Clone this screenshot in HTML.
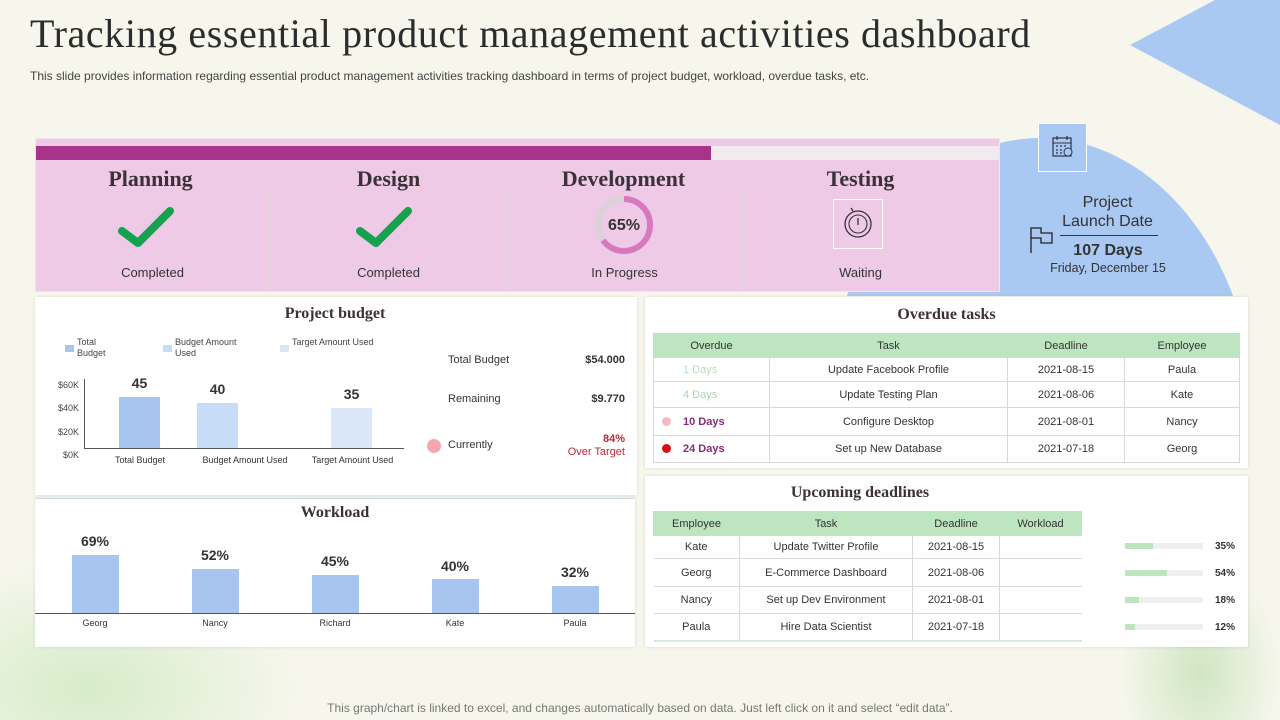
<!DOCTYPE html>
<html><head><meta charset="utf-8"><style>
*{margin:0;padding:0;box-sizing:border-box}
html,body{width:1280px;height:720px;overflow:hidden}
body{position:relative;font-family:"Liberation Sans",sans-serif;background:#f6f6ec;color:#333}
.a{position:absolute}
.serif{font-family:"Liberation Serif",serif;font-weight:bold;color:#3b3139}
.c{text-align:center}
.panel{position:absolute;background:#fff;box-shadow:0 0 3px rgba(0,0,0,.12)}
table{border-collapse:collapse;position:absolute;font-size:11px;color:#333}
td,th{text-align:center;border:1px solid #d8d8d8;font-weight:normal}
th{background:#bde5c0;border-color:#bde5c0}
</style></head><body>
<div class="a" style="left:0;top:560px;width:300px;height:160px;background:radial-gradient(ellipse at 30% 80%,#d6ecc9 0%,rgba(246,246,236,0) 70%)"></div>
<div class="a" style="left:1120px;top:560px;width:160px;height:160px;background:radial-gradient(ellipse at 50% 70%,#cfe6c2 0%,rgba(246,246,236,0) 70%)"></div>
<svg class="a" style="left:0;top:0" width="1280" height="300">
<defs><clipPath id="cp"><rect x="0" y="0" width="1280" height="296"/></clipPath></defs>
<polygon points="1130,45 1215,0 1280,0 1280,125" fill="#a9c8f2"/>
<ellipse cx="1040" cy="420" rx="215" ry="282" fill="#a9c8f2" clip-path="url(#cp)"/>
</svg>
<div class="a serif" style="left:30px;top:10px;font-size:40px;font-weight:normal;color:#2c2c2c;letter-spacing:0.6px;white-space:nowrap">Tracking essential product management activities dashboard</div>
<div class="a" style="left:30px;top:69px;font-size:12px;color:#444;white-space:nowrap">This slide provides information regarding essential product management activities tracking dashboard in terms of project budget, workload, overdue tasks, etc.</div>

<!-- pink panel -->
<div class="a" style="left:35px;top:138px;width:965px;height:154px;background:#efcae6;border:1px solid #f3e3ee"></div>
<div class="a" style="left:36px;top:146px;width:675px;height:14px;background:#a8338b"></div>
<div class="a" style="left:711px;top:146px;width:288px;height:14px;background:#f1ebf0"></div>
<div class="a" style="left:270px;top:188px;width:1px;height:104px;background:#e3d3dd"></div>
<div class="a" style="left:506px;top:188px;width:1px;height:104px;background:#e3d3dd"></div>
<div class="a" style="left:742px;top:188px;width:1px;height:104px;background:#e3d3dd"></div>
<div class="a serif c" style="left:33px;top:166px;width:235px;font-size:22px">Planning</div>
<div class="a serif c" style="left:271px;top:166px;width:235px;font-size:22px">Design</div>
<div class="a serif c" style="left:506px;top:166px;width:235px;font-size:22px">Development</div>
<div class="a serif c" style="left:743px;top:166px;width:235px;font-size:22px">Testing</div>
<svg class="a" style="left:115px;top:205px" width="60" height="45"><path d="M7,26 L23,38 L55,6" fill="none" stroke="#14a24c" stroke-width="8" stroke-linecap="round" stroke-linejoin="round"/></svg>
<svg class="a" style="left:353px;top:205px" width="60" height="45"><path d="M7,26 L23,38 L55,6" fill="none" stroke="#14a24c" stroke-width="8" stroke-linecap="round" stroke-linejoin="round"/></svg>
<svg class="a" style="left:592px;top:195px" width="64" height="60"><circle cx="32" cy="30" r="26" fill="none" stroke="#d9d2d8" stroke-width="6"/><circle cx="32" cy="30" r="26" fill="none" stroke="#d679bf" stroke-width="6" stroke-dasharray="106 164" transform="rotate(-90 32 30)"/></svg>
<div class="a c" style="left:592px;top:217px;width:64px;font-size:16px;font-weight:bold;color:#333">65%</div>
<div class="a" style="left:833px;top:199px;width:50px;height:50px;border:1px solid #fff"></div>
<svg class="a" style="left:840px;top:206px" width="36" height="36"><circle cx="18" cy="18" r="13" fill="none" stroke="#333" stroke-width="1.3"/><circle cx="18" cy="18" r="9" fill="none" stroke="#333" stroke-width="1.1"/><path d="M18,12 L18,19 M13,5 L11,2" stroke="#333" stroke-width="1.3" fill="none"/></svg>
<div class="a c" style="left:35px;top:265px;width:235px;font-size:13px">Completed</div>
<div class="a c" style="left:271px;top:265px;width:235px;font-size:13px">Completed</div>
<div class="a c" style="left:507px;top:265px;width:235px;font-size:13px">In Progress</div>
<div class="a c" style="left:743px;top:265px;width:235px;font-size:13px">Waiting</div>

<!-- launch -->
<div class="a" style="left:1038px;top:123px;width:49px;height:49px;border:1px solid #fff;background:#a9c8f2"></div>
<svg class="a" style="left:1051px;top:134px" width="24" height="26"><rect x="2" y="4" width="18" height="18" fill="none" stroke="#334" stroke-width="1.2"/><line x1="2" y1="9" x2="20" y2="9" stroke="#334"/><path d="M5,12h2M9,12h2M13,12h2M5,16h2M9,16h2M5,19h2M9,19h2M6,2v4M16,2v4" stroke="#334" stroke-width="1.2"/><circle cx="17" cy="18" r="4" fill="#a9c8f2" stroke="#334"/></svg>
<div class="a c" style="left:1055px;top:193px;width:105px;font-size:16px;color:#333;line-height:19px">Project<br>Launch Date</div>
<div class="a" style="left:1060px;top:235px;width:98px;height:1px;background:#333"></div>
<svg class="a" style="left:1028px;top:225px" width="30" height="30"><path d="M3,28 V3 H13 V8 H24 V18 H13 V13 H3" fill="none" stroke="#222" stroke-width="1.3"/></svg>
<div class="a c" style="left:1048px;top:242px;width:120px;font-size:16px;font-weight:bold;color:#333">107 Days</div>
<div class="a c" style="left:1038px;top:261px;width:140px;font-size:12.5px;color:#333">Friday, December 15</div>

<!-- budget -->
<div class="panel" style="left:35px;top:297px;width:602px;height:198px"></div>
<div class="a serif c" style="left:35px;top:305px;width:600px;font-size:16px">Project budget</div>
<div class="a" style="left:65px;top:345px;width:9px;height:7px;background:#a7c5ef"></div>
<div class="a" style="left:77px;top:337px;font-size:9px;color:#444;line-height:11px">Total<br>Budget</div>
<div class="a" style="left:163px;top:345px;width:9px;height:7px;background:#c7dcf6"></div>
<div class="a" style="left:175px;top:337px;font-size:9px;color:#444;line-height:11px">Budget Amount<br>Used</div>
<div class="a" style="left:280px;top:345px;width:9px;height:7px;background:#dae7f9"></div>
<div class="a" style="left:292px;top:337px;font-size:9px;color:#444">Target Amount Used</div>
<div class="a" style="left:45px;top:374px;font-size:9px;color:#444;line-height:23.3px;text-align:right;width:34px">$60K<br>$40K<br>$20K<br>$0K</div>
<div class="a" style="left:84px;top:379px;width:1px;height:70px;background:#555"></div>
<div class="a" style="left:84px;top:448px;width:320px;height:1px;background:#555"></div>
<div class="a" style="left:119px;top:397px;width:41px;height:51px;background:#a7c5ef"></div>
<div class="a" style="left:197px;top:403px;width:41px;height:45px;background:#c7dcf6"></div>
<div class="a" style="left:331px;top:408px;width:41px;height:40px;background:#dae7f9"></div>
<div class="a c" style="left:119px;top:375px;width:41px;font-size:14px;font-weight:bold">45</div>
<div class="a c" style="left:197px;top:381px;width:41px;font-size:14px;font-weight:bold">40</div>
<div class="a c" style="left:331px;top:386px;width:41px;font-size:14px;font-weight:bold">35</div>
<div class="a c" style="left:90px;top:455px;width:100px;font-size:9px;color:#333">Total Budget</div>
<div class="a c" style="left:185px;top:455px;width:120px;font-size:9px;color:#333">Budget Amount Used</div>
<div class="a c" style="left:295px;top:455px;width:115px;font-size:9px;color:#333">Target Amount Used</div>
<div class="a" style="left:448px;top:354px;font-size:11px">Total Budget</div>
<div class="a" style="left:560px;top:354px;width:65px;text-align:right;font-size:11px;font-weight:bold">$54.000</div>
<div class="a" style="left:448px;top:393px;font-size:11px">Remaining</div>
<div class="a" style="left:560px;top:393px;width:65px;text-align:right;font-size:11px;font-weight:bold">$9.770</div>
<div class="a" style="left:427px;top:439px;width:14px;height:14px;border-radius:50%;background:#f2a8ae"></div>
<div class="a" style="left:448px;top:439px;font-size:11px">Currently</div>
<div class="a" style="left:545px;top:433px;width:80px;text-align:right;font-size:11px;color:#c0283a;line-height:13px"><b>84%</b><br>Over Target</div>

<!-- workload -->
<div class="panel" style="left:35px;top:498px;width:600px;height:149px;border-top:1px solid #cfe0ec"></div>
<div class="a serif c" style="left:35px;top:504px;width:600px;font-size:16px">Workload</div>
<div class="a" style="left:35px;top:613px;width:600px;height:1px;background:#555"></div>
<div class="a" style="left:72px;top:555px;width:47px;height:58px;background:#a7c5ef"></div>
<div class="a" style="left:192px;top:569px;width:47px;height:44px;background:#a7c5ef"></div>
<div class="a" style="left:312px;top:575px;width:47px;height:38px;background:#a7c5ef"></div>
<div class="a" style="left:432px;top:579px;width:47px;height:34px;background:#a7c5ef"></div>
<div class="a" style="left:552px;top:586px;width:47px;height:27px;background:#a7c5ef"></div>
<div class="a c" style="left:65px;top:533px;width:60px;font-size:14px;font-weight:bold">69%</div>
<div class="a c" style="left:185px;top:547px;width:60px;font-size:14px;font-weight:bold">52%</div>
<div class="a c" style="left:305px;top:553px;width:60px;font-size:14px;font-weight:bold">45%</div>
<div class="a c" style="left:425px;top:558px;width:60px;font-size:14px;font-weight:bold">40%</div>
<div class="a c" style="left:545px;top:564px;width:60px;font-size:14px;font-weight:bold">32%</div>
<div class="a c" style="left:65px;top:618px;width:60px;font-size:9px">Georg</div>
<div class="a c" style="left:185px;top:618px;width:60px;font-size:9px">Nancy</div>
<div class="a c" style="left:305px;top:618px;width:60px;font-size:9px">Richard</div>
<div class="a c" style="left:425px;top:618px;width:60px;font-size:9px">Kate</div>
<div class="a c" style="left:545px;top:618px;width:60px;font-size:9px">Paula</div>

<!-- overdue -->
<div class="panel" style="left:645px;top:297px;width:603px;height:171px"></div>
<div class="a serif c" style="left:645px;top:306px;width:603px;font-size:16px">Overdue tasks</div>
<table style="left:653px;top:333px;width:587px">
<tr style="height:24px"><th style="width:116px">Overdue</th><th style="width:238px">Task</th><th style="width:117px">Deadline</th><th>Employee</th></tr>
<tr style="height:24px"><td style="text-align:left;padding-left:29px;color:#b9e0bf">1 Days</td><td>Update Facebook Profile</td><td>2021-08-15</td><td>Paula</td></tr>
<tr style="height:26px"><td style="text-align:left;padding-left:29px;color:#a7d8ae">4 Days</td><td>Update Testing Plan</td><td>2021-08-06</td><td>Kate</td></tr>
<tr style="height:28px"><td style="text-align:left;padding-left:8px;color:#8a2a7a;font-weight:bold"><span style="display:inline-block;width:9px;height:9px;border-radius:50%;background:#f5b8c0;margin-right:12px;vertical-align:-1px"></span>10 Days</td><td>Configure Desktop</td><td>2021-08-01</td><td>Nancy</td></tr>
<tr style="height:27px"><td style="text-align:left;padding-left:8px;color:#8a2a7a;font-weight:bold"><span style="display:inline-block;width:9px;height:9px;border-radius:50%;background:#d80f0f;margin-right:12px;vertical-align:-1px"></span>24 Days</td><td>Set up New Database</td><td>2021-07-18</td><td>Georg</td></tr>
</table>

<!-- upcoming -->
<div class="panel" style="left:645px;top:476px;width:603px;height:171px"></div>
<div class="a serif c" style="left:645px;top:484px;width:430px;font-size:16px">Upcoming deadlines</div>
<table style="left:653px;top:511px;width:429px">
<tr style="height:24px"><th style="width:86px">Employee</th><th style="width:173px">Task</th><th style="width:87px">Deadline</th><th>Workload</th></tr>
<tr style="height:23px"><td style="border-left:none">Kate</td><td>Update Twitter Profile</td><td>2021-08-15</td><td style="border-right:none"></td></tr>
<tr style="height:28px"><td style="border-left:none">Georg</td><td>E-Commerce Dashboard</td><td>2021-08-06</td><td style="border-right:none"></td></tr>
<tr style="height:27px"><td style="border-left:none">Nancy</td><td>Set up Dev Environment</td><td>2021-08-01</td><td style="border-right:none"></td></tr>
<tr style="height:27px"><td style="border-left:none;border-bottom:2px solid #d5ecd6">Paula</td><td style="border-bottom:2px solid #d5ecd6">Hire Data Scientist</td><td style="border-bottom:2px solid #d5ecd6">2021-07-18</td><td style="border-right:none;border-bottom:2px solid #d5ecd6"></td></tr>
</table>
<div class="a" style="left:1125px;top:543px;width:78px;height:6px;background:#efefef"><div style="width:28px;height:6px;background:#bde5c0"></div></div>
<div class="a" style="left:1125px;top:570px;width:78px;height:6px;background:#efefef"><div style="width:42px;height:6px;background:#bde5c0"></div></div>
<div class="a" style="left:1125px;top:597px;width:78px;height:6px;background:#efefef"><div style="width:14px;height:6px;background:#bde5c0"></div></div>
<div class="a" style="left:1125px;top:624px;width:78px;height:6px;background:#efefef"><div style="width:10px;height:6px;background:#bde5c0"></div></div>
<div class="a" style="left:1215px;top:533px;font-size:10px;font-weight:bold;line-height:27px">35%<br>54%<br>18%<br>12%</div>

<div class="a c" style="left:0;top:701px;width:1280px;height:16px;font-size:12px;line-height:14px;color:#777;white-space:nowrap">This graph/chart is linked to excel, and changes automatically based on data. Just left click on it and select “edit data”.</div>
</body></html>
